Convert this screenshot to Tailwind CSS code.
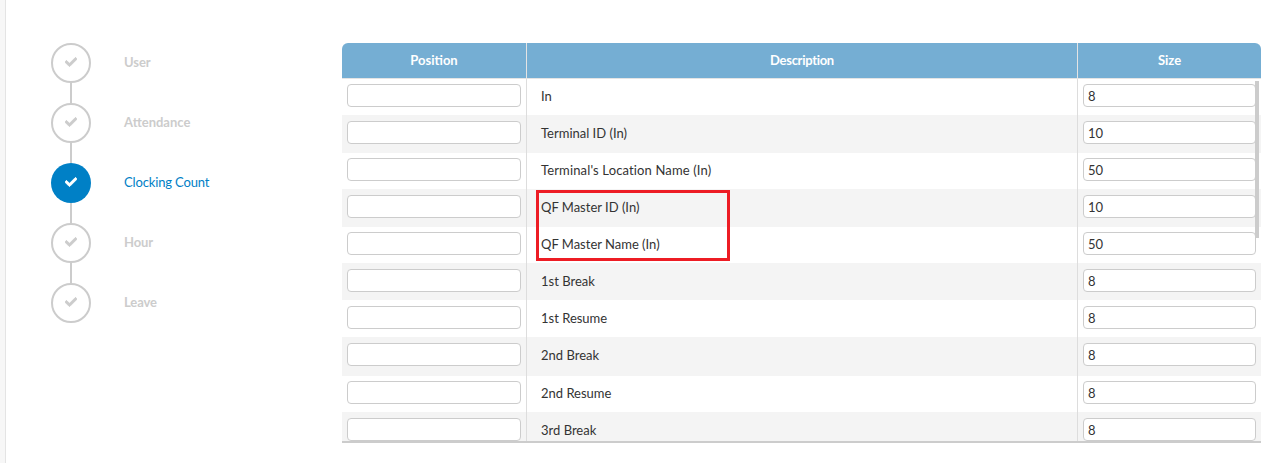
<!DOCTYPE html>
<html lang="en">
  <head>
    <meta charset="UTF-8" />
    <title>Clocking Count</title>
    <script src="https://cdn.jsdelivr.net/npm/@tailwindcss/browser@4"></script>
  </head>
  <body class="bg-white text-[#333] font-['Lato',sans-serif] text-[13px] overflow-hidden">
    <div class="flex h-[463px] w-[1282px]">
      <!-- left edge -->
      <div class="w-[6px] shrink-0 bg-[#f7f7f7] border-r border-[#e4e4e4]"></div>

      <!-- steps -->
      <aside class="w-[336px] shrink-0 pt-[43px] pl-[45px]">
        <div class="flex items-center h-[40px]">
          <div class="w-[40px] h-[40px] rounded-full border-2 border-[#ccc] bg-white flex items-center justify-center">
            <svg class="w-[12px] h-[12px] mb-[3px] text-[#ccc]" viewBox="0 0 512 512" fill="currentColor" stroke="currentColor" stroke-width="36"><path d="M173.898 439.404l-166.4-166.4c-9.997-9.997-9.997-26.206 0-36.204l36.203-36.204c9.997-9.998 26.207-9.998 36.204 0L192 312.69 432.095 72.596c9.997-9.997 26.207-9.997 36.204 0l36.203 36.204c9.997 9.997 9.997 26.206 0 36.204l-294.4 294.401c-9.998 9.997-26.207 9.997-36.204-.001z"/></svg>
          </div>
          <span class="ml-[33px] font-bold tracking-[-0.1px] text-[#ccc]">User</span>
        </div>
        <div class="w-[2px] h-[20px] ml-[19px] bg-[#ccc]"></div>
        <div class="flex items-center h-[40px]">
          <div class="w-[40px] h-[40px] rounded-full border-2 border-[#ccc] bg-white flex items-center justify-center">
            <svg class="w-[12px] h-[12px] mb-[3px] text-[#ccc]" viewBox="0 0 512 512" fill="currentColor" stroke="currentColor" stroke-width="36"><path d="M173.898 439.404l-166.4-166.4c-9.997-9.997-9.997-26.206 0-36.204l36.203-36.204c9.997-9.998 26.207-9.998 36.204 0L192 312.69 432.095 72.596c9.997-9.997 26.207-9.997 36.204 0l36.203 36.204c9.997 9.997 9.997 26.206 0 36.204l-294.4 294.401c-9.998 9.997-26.207 9.997-36.204-.001z"/></svg>
          </div>
          <span class="ml-[33px] font-bold text-[#ccc]">Attendance</span>
        </div>
        <div class="w-[2px] h-[20px] ml-[19px] bg-[#ccc]"></div>
        <div class="flex items-center h-[40px]">
          <div class="w-[40px] h-[40px] rounded-full bg-[#0080c6] flex items-center justify-center">
            <svg class="w-[12px] h-[12px] mb-[3px] text-white" viewBox="0 0 512 512" fill="currentColor" stroke="currentColor" stroke-width="36"><path d="M173.898 439.404l-166.4-166.4c-9.997-9.997-9.997-26.206 0-36.204l36.203-36.204c9.997-9.998 26.207-9.998 36.204 0L192 312.69 432.095 72.596c9.997-9.997 26.207-9.997 36.204 0l36.203 36.204c9.997 9.997 9.997 26.206 0 36.204l-294.4 294.401c-9.998 9.997-26.207 9.997-36.204-.001z"/></svg>
          </div>
          <span class="ml-[33px] font-normal tracking-[-0.15px] text-[#0080c6]">Clocking Count</span>
        </div>
        <div class="w-[2px] h-[20px] ml-[19px] bg-[#ccc]"></div>
        <div class="flex items-center h-[40px]">
          <div class="w-[40px] h-[40px] rounded-full border-2 border-[#ccc] bg-white flex items-center justify-center">
            <svg class="w-[12px] h-[12px] mb-[3px] text-[#ccc]" viewBox="0 0 512 512" fill="currentColor" stroke="currentColor" stroke-width="36"><path d="M173.898 439.404l-166.4-166.4c-9.997-9.997-9.997-26.206 0-36.204l36.203-36.204c9.997-9.998 26.207-9.998 36.204 0L192 312.69 432.095 72.596c9.997-9.997 26.207-9.997 36.204 0l36.203 36.204c9.997 9.997 9.997 26.206 0 36.204l-294.4 294.401c-9.998 9.997-26.207 9.997-36.204-.001z"/></svg>
          </div>
          <span class="ml-[33px] font-bold tracking-[-0.1px] text-[#ccc]">Hour</span>
        </div>
        <div class="w-[2px] h-[20px] ml-[19px] bg-[#ccc]"></div>
        <div class="flex items-center h-[40px]">
          <div class="w-[40px] h-[40px] rounded-full border-2 border-[#ccc] bg-white flex items-center justify-center">
            <svg class="w-[12px] h-[12px] mb-[3px] text-[#ccc]" viewBox="0 0 512 512" fill="currentColor" stroke="currentColor" stroke-width="36"><path d="M173.898 439.404l-166.4-166.4c-9.997-9.997-9.997-26.206 0-36.204l36.203-36.204c9.997-9.998 26.207-9.998 36.204 0L192 312.69 432.095 72.596c9.997-9.997 26.207-9.997 36.204 0l36.203 36.204c9.997 9.997 9.997 26.206 0 36.204l-294.4 294.401c-9.998 9.997-26.207 9.997-36.204-.001z"/></svg>
          </div>
          <span class="ml-[33px] font-bold tracking-[-0.1px] text-[#ccc]">Leave</span>
        </div>
      </aside>

      <!-- table -->
      <main class="w-[919px] shrink-0 pt-[43px]">
        <div class="relative">
          <div class="grid grid-cols-[185px_551px_183px] h-[36px] bg-[#75aed3] rounded-t-[6px] border-b border-[#e4e4e4] text-white font-bold text-center leading-[35px]">
            <div class="border-r border-[#e4e4e4]">Position</div>
            <div class="border-r border-[#e4e4e4] tracking-[-0.3px]">Description</div>
            <div>Size</div>
          </div>
          <div class="h-[362px] overflow-hidden border-b-2 border-[#ccc] box-content">
            <div class="grid grid-cols-[185px_551px_183px] h-[36px] bg-white">
              <div class="border-r border-[#ddd] pl-[5px] pt-[5px]"><input class="block w-[174px] h-[23px] rounded-[4px] border border-[#ccc] bg-white" /></div>
              <div class="border-r border-[#ddd] pl-[14px] leading-[34px]">In</div>
              <div class="pl-[5px] pt-[5px]"><input value="8" class="block w-[173px] h-[23px] rounded-[4px] border border-[#ccc] bg-white px-[4px] text-[13px]" /></div>
            </div>
            <div class="grid grid-cols-[185px_551px_183px] h-[38px] bg-[#f4f4f4]">
              <div class="border-r border-[#ddd] pl-[5px] pt-[6px]"><input class="block w-[174px] h-[23px] rounded-[4px] border border-[#ccc] bg-white" /></div>
              <div class="border-r border-[#ddd] pl-[14px] leading-[36px]">Terminal ID (In)</div>
              <div class="pl-[5px] pt-[6px]"><input value="10" class="block w-[173px] h-[23px] rounded-[4px] border border-[#ccc] bg-white px-[4px] text-[13px]" /></div>
            </div>
            <div class="grid grid-cols-[185px_551px_183px] h-[36px] bg-white">
              <div class="border-r border-[#ddd] pl-[5px] pt-[5px]"><input class="block w-[174px] h-[23px] rounded-[4px] border border-[#ccc] bg-white" /></div>
              <div class="border-r border-[#ddd] pl-[14px] leading-[34px] tracking-[0.14px]">Terminal's Location Name (In)</div>
              <div class="pl-[5px] pt-[5px]"><input value="50" class="block w-[173px] h-[23px] rounded-[4px] border border-[#ccc] bg-white px-[4px] text-[13px]" /></div>
            </div>
            <div class="grid grid-cols-[185px_551px_183px] h-[38px] bg-[#f4f4f4]">
              <div class="border-r border-[#ddd] pl-[5px] pt-[6px]"><input class="block w-[174px] h-[23px] rounded-[4px] border border-[#ccc] bg-white" /></div>
              <div class="border-r border-[#ddd] pl-[14px] leading-[36px]">QF Master ID (In)</div>
              <div class="pl-[5px] pt-[6px]"><input value="10" class="block w-[173px] h-[23px] rounded-[4px] border border-[#ccc] bg-white px-[4px] text-[13px]" /></div>
            </div>
            <div class="grid grid-cols-[185px_551px_183px] h-[36px] bg-white">
              <div class="border-r border-[#ddd] pl-[5px] pt-[5px]"><input class="block w-[174px] h-[23px] rounded-[4px] border border-[#ccc] bg-white" /></div>
              <div class="border-r border-[#ddd] pl-[14px] leading-[34px]">QF Master Name (In)</div>
              <div class="pl-[5px] pt-[5px]"><input value="50" class="block w-[173px] h-[23px] rounded-[4px] border border-[#ccc] bg-white px-[4px] text-[13px]" /></div>
            </div>
            <div class="grid grid-cols-[185px_551px_183px] h-[37px] bg-[#f4f4f4]">
              <div class="border-r border-[#ddd] pl-[5px] pt-[6px]"><input class="block w-[174px] h-[23px] rounded-[4px] border border-[#ccc] bg-white" /></div>
              <div class="border-r border-[#ddd] pl-[14px] leading-[36px]">1st Break</div>
              <div class="pl-[5px] pt-[6px]"><input value="8" class="block w-[173px] h-[23px] rounded-[4px] border border-[#ccc] bg-white px-[4px] text-[13px]" /></div>
            </div>
            <div class="grid grid-cols-[185px_551px_183px] h-[37px] bg-white">
              <div class="border-r border-[#ddd] pl-[5px] pt-[6px]"><input class="block w-[174px] h-[23px] rounded-[4px] border border-[#ccc] bg-white" /></div>
              <div class="border-r border-[#ddd] pl-[14px] leading-[36px]">1st Resume</div>
              <div class="pl-[5px] pt-[6px]"><input value="8" class="block w-[173px] h-[23px] rounded-[4px] border border-[#ccc] bg-white px-[4px] text-[13px]" /></div>
            </div>
            <div class="grid grid-cols-[185px_551px_183px] h-[39px] bg-[#f4f4f4]">
              <div class="border-r border-[#ddd] pl-[5px] pt-[6px]"><input class="block w-[174px] h-[23px] rounded-[4px] border border-[#ccc] bg-white" /></div>
              <div class="border-r border-[#ddd] pl-[14px] leading-[36px]">2nd Break</div>
              <div class="pl-[5px] pt-[6px]"><input value="8" class="block w-[173px] h-[23px] rounded-[4px] border border-[#ccc] bg-white px-[4px] text-[13px]" /></div>
            </div>
            <div class="grid grid-cols-[185px_551px_183px] h-[36px] bg-white">
              <div class="border-r border-[#ddd] pl-[5px] pt-[5px]"><input class="block w-[174px] h-[23px] rounded-[4px] border border-[#ccc] bg-white" /></div>
              <div class="border-r border-[#ddd] pl-[14px] leading-[34px]">2nd Resume</div>
              <div class="pl-[5px] pt-[5px]"><input value="8" class="block w-[173px] h-[23px] rounded-[4px] border border-[#ccc] bg-white px-[4px] text-[13px]" /></div>
            </div>
            <div class="grid grid-cols-[185px_551px_183px] h-[38px] bg-[#f4f4f4]">
              <div class="border-r border-[#ddd] pl-[5px] pt-[6px]"><input class="block w-[174px] h-[23px] rounded-[4px] border border-[#ccc] bg-white" /></div>
              <div class="border-r border-[#ddd] pl-[14px] leading-[36px]">3rd Break</div>
              <div class="pl-[5px] pt-[6px]"><input value="8" class="block w-[173px] h-[23px] rounded-[4px] border border-[#ccc] bg-white px-[4px] text-[13px]" /></div>
            </div>
          </div>
          <!-- scrollbar thumb -->
          <div class="absolute left-[913px] top-[38px] w-[4px] h-[157px] bg-[#ccc]"></div>
          <!-- red annotation -->
          <div class="absolute left-[194px] top-[147px] w-[194px] h-[71px] border-[3px] border-[#ed1c24]"></div>
        </div>
      </main>
    </div>
  </body>
</html>
